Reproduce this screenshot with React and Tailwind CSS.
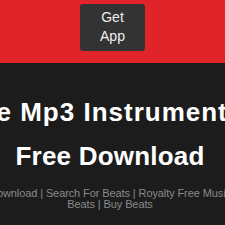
export default function App() {
  return (
    <div className="w-[225px] h-[225px] overflow-hidden bg-[#1c1c1c] font-['Liberation_Sans',Arial,sans-serif]">
      <header className="h-[63px] bg-[#e1232a] flex justify-center">
        <button className="mt-[4px] w-[65px] h-[47px] bg-[#333333] rounded-[3px] text-[#eeeeee] text-[14px] leading-[19px] pt-[4px] flex flex-col items-center">
          <span>Get</span>
          <span>App</span>
        </button>
      </header>

      <div className="flex justify-center pr-[5px] mt-[27px]">
        <h1 className="w-[340px] shrink-0 text-center text-white font-bold text-[26px] leading-[44px] tracking-[0.2px]">
          <span className="tracking-[1px]">Free Mp3 Instrumentals</span> Free Download
        </h1>
      </div>

      <div className="flex justify-center pr-[5px] mt-[10px]">
        <p className="w-[262px] shrink-0 text-center text-[#8a8a8a] text-[11px] leading-[11px] tracking-[-0.1px]">
          Download | Search For Beats | Royalty Free Music Beats | Buy Beats
        </p>
      </div>
    </div>
  );
}
